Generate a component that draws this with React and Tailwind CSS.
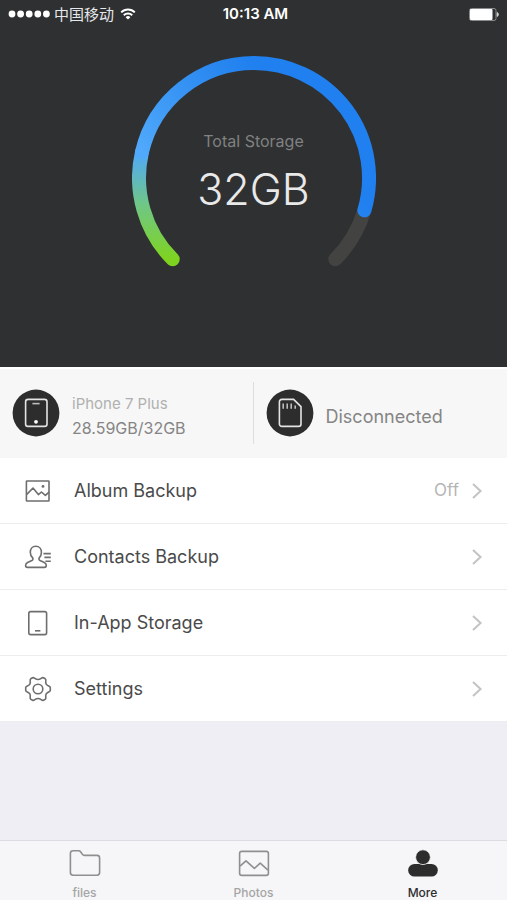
import React from "react";

const StatusBar = () => (
  <div className="grid grid-cols-3 items-center h-7 px-2 text-white">
    <div className="flex items-center">
      <svg width="42" height="8" viewBox="0 0 42 8" fill="currentColor">
        <circle cx="4" cy="4" r="3.4" />
        <circle cx="12.6" cy="4" r="3.4" />
        <circle cx="21.2" cy="4" r="3.4" />
        <circle cx="29.8" cy="4" r="3.4" />
        <circle cx="38.4" cy="4" r="3.4" />
      </svg>
      <span className="ml-1 text-[15px] leading-5 text-gray-200 font-['Noto_Sans_CJK_SC',sans-serif]">
        中国移动
      </span>
      <svg
        className="ml-1.5"
        width="16"
        height="12"
        viewBox="0 0 16 12"
        fill="none"
        stroke="currentColor"
        strokeWidth="2"
      >
        <path d="M1.2 4.4a9.6 9.6 0 0 1 13.6 0" />
        <path d="M3.8 7.2a5.9 5.9 0 0 1 8.4 0" />
        <path d="M8 11.6 5.6 9.2a3.4 3.4 0 0 1 4.8 0Z" fill="currentColor" stroke="none" />
      </svg>
    </div>
    <div className="pl-1 text-center text-[15px] leading-5 font-semibold">10:13 AM</div>
    <div className="flex justify-end">
      <svg width="30" height="13" viewBox="0 0 30 13">
        <rect x="0.5" y="0.5" width="26.5" height="12" rx="2" fill="none" stroke="#8a8b8d" />
        <rect x="1" y="1" width="22.5" height="11" rx="1" fill="#fff" />
        <path d="M28.2 4.6c1.6.6 1.6 3.2 0 3.8Z" fill="#d6d6d6" stroke="#d6d6d6" />
      </svg>
    </div>
  </div>
);

const StorageGauge = ({ label, value }) => (
  <div className="grid justify-center">
    <svg
      className="col-start-1 row-start-1"
      width="244"
      height="211"
      viewBox="0 0 244 211"
      fill="none"
      strokeWidth="14"
      strokeLinecap="round"
    >
      <defs>
        <linearGradient id="low" gradientUnits="userSpaceOnUse" x1="0" y1="203" x2="0" y2="96">
          <stop offset="0" stopColor="#7ed321" />
          <stop offset="0.5" stopColor="#70c784" />
          <stop offset="1" stopColor="#50a9fb" />
        </linearGradient>
        <linearGradient id="high" gradientUnits="userSpaceOnUse" x1="10" y1="96" x2="122" y2="7">
          <stop offset="0" stopColor="#50a9fb" />
          <stop offset="0.75" stopColor="#2a88f0" />
          <stop offset="1" stopColor="#2080ef" />
        </linearGradient>
      </defs>
      <path d="M232.4 154.3A115 115 0 0 1 203.3 203.3" stroke="#434342" />
      <path d="M40.7 203.3A115 115 0 0 1 10 96" stroke="url(#low)" />
      <path d="M10 96A115 115 0 0 1 122 7A115 115 0 0 1 232.4 154.3" stroke="url(#high)" />
    </svg>
    <div className="col-start-1 row-start-1 pt-[73px] text-center">
      <div className="text-base leading-6 text-[#808182]">{label}</div>
      <div className="mt-3 text-[43px] leading-12 font-light text-[#e9e9e9]">{value}</div>
    </div>
  </div>
);

const PhoneBadge = () => (
  <svg className="shrink-0" width="48" height="48" viewBox="0 0 48 48" fill="none">
    <circle cx="24" cy="24" r="23.4" fill="#2d2d2e" />
    <rect x="13.6" y="10.4" width="21.4" height="27" rx="2.4" stroke="#e4e4e4" strokeWidth="1.6" />
    <path d="M20.4 14.6h7.2" stroke="#bdbdbd" strokeWidth="1.6" />
    <circle cx="24" cy="32.8" r="1.9" fill="#fff" />
  </svg>
);

const CardBadge = () => (
  <svg className="shrink-0" width="48" height="48" viewBox="0 0 48 48" fill="none">
    <circle cx="24" cy="24" r="23.4" fill="#2d2d2e" />
    <path
      d="M15.8 10.4H27.6L35 17.6V35a2.4 2.4 0 0 1-2.4 2.4H15.8A2.4 2.4 0 0 1 13.4 35V12.8a2.4 2.4 0 0 1 2.4-2.4Z"
      stroke="#e4e4e4"
      strokeWidth="1.6"
    />
    <path d="M17.2 14.6v5.2M21.2 14.6v5.2M25.2 14.6v5.2M29.2 16.4v3.4" stroke="#c4c4c4" strokeWidth="1.5" />
  </svg>
);

const iconProps = {
  width: 28,
  height: 28,
  viewBox: "0 0 28 28",
  fill: "none",
  stroke: "#6e6e6e",
  strokeWidth: 1.6,
  strokeLinejoin: "round",
};

const AlbumIcon = () => (
  <svg {...iconProps}>
    <rect x="2.4" y="4" width="22.6" height="20" rx="0.6" />
    <path d="M2.8 17.4 9 11l5.4 6.6 3-2.6 4 3.4 3.6-3.2" />
    <circle cx="19" cy="9.4" r="1.4" fill="#6e6e6e" stroke="none" />
  </svg>
);

const ContactsIcon = () => (
  <svg {...iconProps}>
    <path d="M11.8 3.2c-3.5 0-5.5 2.6-5.5 6 0 2.6 1 4.2 2.2 5.4.8.9.6 2.4-.6 3l-4.3 2c-1.3.6-2 1.5-2 2.9 0 1.2.7 1.9 1.9 1.9h16.9c1.2 0 1.9-.7 1.9-1.9 0-1.4-.7-2.3-2-2.9l-4.3-2c-1.2-.6-1.4-2.1-.6-3 1.2-1.2 2-2.8 2-5.4 0-3.4-2.1-6-5.6-6Z" />
    <path d="M19.4 10.6h7.4M20.4 14.4h6.4M21.4 18.2h5.4" />
  </svg>
);

const TabletIcon = () => (
  <svg {...iconProps}>
    <rect x="4.8" y="2.6" width="17.8" height="23" rx="1.8" />
    <path d="M11 21.8h5.4" />
  </svg>
);

const GearIcon = () => (
  <svg {...iconProps}>
    <path d="M8.6 2.7C10.4 1.9 11 4.5 14 4.5s3.6-2.6 5.4-1.8l1.9 1.1c1.6 1.2-.6 2.8.9 5.3s3.9 1.6 4.1 3.6v2.6c-.2 2-2.6 1.1-4.1 3.6s.7 4.1-.9 5.3l-1.9 1.1c-1.8.8-2.4-1.8-5.4-1.8s-3.6 2.6-5.4 1.8l-1.9-1.1c-1.6-1.2.6-2.8-.9-5.3s-3.9-1.6-4.1-3.6v-2.6c.2-2 2.6-1.1 4.1-3.6s-.7-4.1.9-5.3Z" />
    <circle cx="14" cy="14" r="4.8" />
  </svg>
);

const Chevron = () => (
  <svg width="12" height="18" viewBox="0 0 12 18" fill="none" stroke="#c3c3c6" strokeWidth="2">
    <path d="M2 2l7.6 7L2 16" />
  </svg>
);

const tabIconProps = {
  width: 32,
  height: 28,
  viewBox: "0 0 32 28",
  fill: "none",
  stroke: "#8f8f8f",
  strokeWidth: 1.6,
  strokeLinejoin: "round",
};

const FolderIcon = () => (
  <svg {...tabIconProps}>
    <path d="M4 1.8h5.6c.9 0 1.5.3 2 1l2 2.8c.4.5.8.8 1.5.8H28c1.6 0 2.6 1 2.6 2.6v14.6c0 1.6-1 2.6-2.6 2.6H4c-1.6 0-2.6-1-2.6-2.6V4.4c0-1.6 1-2.6 2.6-2.6Z" />
  </svg>
);

const PhotosIcon = () => (
  <svg {...tabIconProps}>
    <rect x="1.6" y="2.4" width="28.8" height="24" rx="2.2" />
    <path d="M2 17.2l6-5.4 8.4 7.6 5.8-5.2 7.8 7" />
  </svg>
);

const MoreIcon = () => (
  <svg {...tabIconProps} fill="#2d2d2e" stroke="none">
    <rect x="1.2" y="15" width="29.6" height="12.6" rx="6.3" />
    <circle cx="16" cy="8.2" r="7.4" stroke="#f6f6f8" strokeWidth="0.8" />
  </svg>
);

const menuItems = [
  { label: "Album Backup", icon: AlbumIcon, value: "Off" },
  { label: "Contacts Backup", icon: ContactsIcon },
  { label: "In-App Storage", icon: TabletIcon },
  { label: "Settings", icon: GearIcon },
];

const tabs = [
  { label: "files", icon: FolderIcon },
  { label: "Photos", icon: PhotosIcon },
  { label: "More", icon: MoreIcon, active: true },
];

const App = () => (
  <div className="flex flex-col min-h-screen bg-[#efeef4] font-[Inter,'Noto_Sans_CJK_SC',sans-serif]">
    <header className="bg-[#2f3031] pb-[100px]">
      <StatusBar />
      <div className="pt-7">
        <StorageGauge label="Total Storage" value="32GB" />
      </div>
    </header>

    <section className="grid grid-cols-2 pt-[13px] pb-3.5 bg-[#f7f7f7] border-t-2 border-white">
      <div className="flex items-center px-3 h-[62px] border-r border-[#dedede]">
        <PhoneBadge />
        <div className="ml-3 pt-1.5">
          <div className="text-[15px] leading-6 text-[#b0b0b0]">iPhone 7 Plus</div>
          <div className="text-base leading-6 text-[#858585]">28.59GB/32GB</div>
        </div>
      </div>
      <div className="flex items-center px-3 h-[62px]">
        <CardBadge />
        <div className="ml-3 pt-2 text-lg leading-6 text-[#858585]">Disconnected</div>
      </div>
    </section>

    <main className="bg-white">
      {menuItems.map(({ label, icon: Icon, value }) => (
        <button
          key={label}
          type="button"
          className="flex items-center w-full h-[66px] px-6 border-b border-[#ededef] text-left text-lg text-[#4a4a4a]"
        >
          <Icon />
          <span className="ml-[22px] flex-1">{label}</span>
          {value && <span className="mr-3 text-[17px] text-[#b5b5b5]">{value}</span>}
          <Chevron />
        </button>
      ))}
    </main>

    <nav className="grid grid-cols-3 mt-auto h-[60px] pt-2 bg-[#f6f6f8] border-t border-[#dcdbe1]">
      {tabs.map(({ label, icon: Icon, active }) => (
        <button
          key={label}
          type="button"
          className={`flex flex-col items-center text-xs font-medium ${
            active ? "text-[#2d2d2e]" : "text-[#a5a5a5]"
          }`}
        >
          <Icon />
          <span className="mt-2 leading-4">{label}</span>
        </button>
      ))}
    </nav>
  </div>
);

export default App;
